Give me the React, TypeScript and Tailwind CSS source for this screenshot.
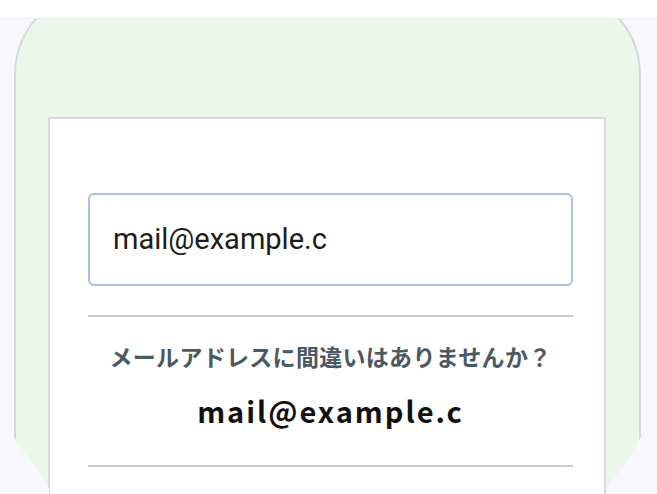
import React from "react";

export default function App() {
  return (
    <div className="relative w-full h-[494px] overflow-hidden bg-[#f8f8fc]">
      <div className="relative z-10 h-[19px] bg-white border-b border-[#ececec]" />
      <div className="-mt-[30px] ml-[14px] mr-[16px] h-[600px] border-2 border-[#d3dad8] rounded-t-[85px] bg-[#edf6ea] pl-[32px] pr-[33px] pt-[126px]">
        <div className="border-2 border-[#d5dbdb] bg-white pt-[74px] pl-[38px] pr-[31px] pb-[40px]">
          <div className="flex items-center h-[93px] border-2 border-[#abbfe6] rounded-[6px] pl-[23px]">
            <span
              className="text-[29px] text-[#1c1c1c]"
              style={{ fontFamily: "Roboto, 'Noto Sans', sans-serif" }}
            >
              mail@example.c
            </span>
          </div>
          <div className="mt-[29px] h-[2px] bg-[#c6ccd1]" />
          <div
            className="mt-[24px] text-center text-[23px] leading-[30px] font-bold tracking-[0.3px] text-[#4b5963]"
            style={{ fontFamily: "'Noto Sans CJK JP', sans-serif" }}
          >
            メールアドレスに間違いはありませんか？
          </div>
          <div
            className="mt-[18px] text-center text-[29px] leading-[42px] font-bold tracking-[2px] text-[#111111]"
            style={{ fontFamily: "'Noto Sans CJK JP', 'Noto Sans', sans-serif" }}
          >
            mail@example.c
          </div>
          <div className="mt-[34px] h-[2px] bg-[#c6ccd1]" />
        </div>
      </div>
      <svg
        className="absolute left-0 bottom-0 pointer-events-none"
        width="657"
        height="70"
        viewBox="0 424 657 70"
      >
        <polygon points="0,424 14,424 14,437 49,488 49,494 0,494" fill="#f8f8fc" />
        <path d="M643,424 L643,433 Q628,462 606,489 L606,494 L657,494 L657,424 Z" fill="#f8f8fc" />
      </svg>
    </div>
  );
}
